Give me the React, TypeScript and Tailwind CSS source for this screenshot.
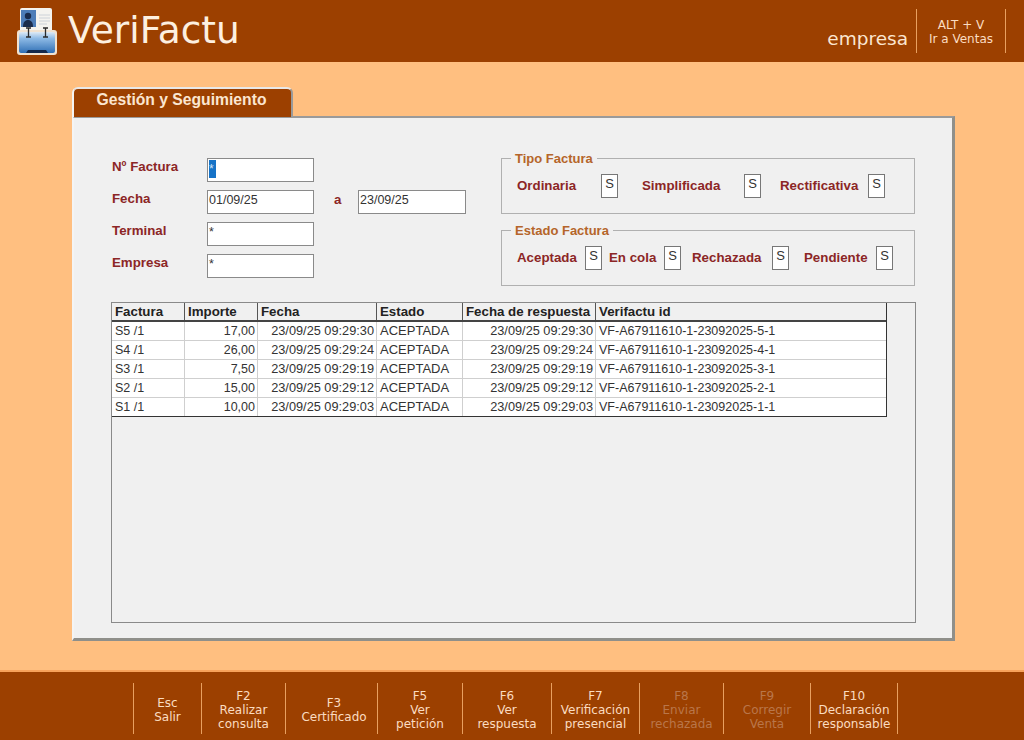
const rows = [
  ["S5 /1", "17,00", "23/09/25 09:29:30", "ACEPTADA", "23/09/25 09:29:30", "VF-A67911610-1-23092025-5-1"],
  ["S4 /1", "26,00", "23/09/25 09:29:24", "ACEPTADA", "23/09/25 09:29:24", "VF-A67911610-1-23092025-4-1"],
  ["S3 /1", "7,50", "23/09/25 09:29:19", "ACEPTADA", "23/09/25 09:29:19", "VF-A67911610-1-23092025-3-1"],
  ["S2 /1", "15,00", "23/09/25 09:29:12", "ACEPTADA", "23/09/25 09:29:12", "VF-A67911610-1-23092025-2-1"],
  ["S1 /1", "10,00", "23/09/25 09:29:03", "ACEPTADA", "23/09/25 09:29:03", "VF-A67911610-1-23092025-1-1"],
]

const headers = ["Factura", "Importe", "Fecha", "Estado", "Fecha de respuesta", "Verifactu id"]

const keys = [
  { w: "w-[68px]", lines: ["Esc", "Salir"] },
  { w: "w-[84px]", lines: ["F2", "Realizar", "consulta"] },
  { w: "w-[92px] pl-[5px]", lines: ["F3", "Certificado"] },
  { w: "w-[85px]", lines: ["F5", "Ver", "petición"] },
  { w: "w-[89px]", lines: ["F6", "Ver", "respuesta"] },
  { w: "w-[88px]", lines: ["F7", "Verificación", "presencial"] },
  { w: "w-[84px]", lines: ["F8", "Enviar", "rechazada"], off: true },
  { w: "w-[87px]", lines: ["F9", "Corregir", "Venta"], off: true },
  { w: "w-[88px]", lines: ["F10", "Declaración", "responsable"] },
]

const Logo = () => (
  <svg width="40" height="47" viewBox="0 0 40 47" className="shrink-0">
    <defs>
      <linearGradient id="box" x1="0" y1="0" x2="0" y2="1">
        <stop offset="0" stopColor="#dfeaf5" />
        <stop offset="0.3" stopColor="#8fbbe6" />
        <stop offset="1" stopColor="#2f6fb5" />
      </linearGradient>
    </defs>
    <rect x="3" y="0" width="32" height="30" rx="2" fill="#f4f3ef" />
    <rect x="4" y="2" width="15" height="17" fill="#4d7db8" />
    <circle cx="11" cy="8" r="3.2" fill="#1a2c4c" />
    <path d="M6 19c0-5 2-7 5-7s5 2 5 7z" fill="#1a2c4c" />
    <path d="M22 7h11M22 10h11M22 13h11M22 16h8" stroke="#cdd2d8" strokeWidth="1" />
    <rect x="0" y="22" width="40" height="25" rx="3" fill="#f1e2d0" />
    <rect x="2" y="24" width="36" height="21" rx="2" fill="url(#box)" />
    <path d="M9 45l2-3h18l2 3z" fill="#14284a" />
    <path d="M9 20h5M11.5 20v9M9 29h5M26 20h5M28.500 20v9M26 29h5" stroke="#2b2b2b" strokeWidth="1.3" />
  </svg>
)

const Field = ({ value, className = "" }: { value: string; className?: string }) => (
  <div className={`h-6 bg-white border border-[#8a8a8a] pl-px text-[12.5px] leading-[18px] text-[#333] ${className}`}>
    {value}
  </div>
)

const Label = ({ children, className = "" }: { children: string; className?: string }) => (
  <span className={`text-[13.3px] font-bold text-[#8c2626] ${className}`}>{children}</span>
)

const Flag = ({ className = "" }: { className?: string }) => (
  <div className={`h-6 w-[17px] shrink-0 bg-white border border-[#777] text-center text-[13px] leading-[18px] text-[#333] ${className}`}>
    S
  </div>
)

const Group = ({ title, children }: { title: string; children: React.ReactNode }) => (
  <div className="relative flex h-14 w-[414px] items-center border border-[#b0b0b0] pl-[15px]">
    <span className="absolute -top-[8px] left-[9px] bg-[#f0f0f0] px-[4px] text-[13px] leading-[16px] font-bold text-[#b5652a]">
      {title}
    </span>
    {children}
  </div>
)

export default function App() {
  return (
    <div className="flex h-[740px] w-[1024px] flex-col overflow-hidden bg-[#ffbf80] font-['Liberation_Sans',Arial,sans-serif]">
      <header className="flex h-[62px] shrink-0 items-center bg-[#9c4000] pl-[17px] font-['DejaVu_Sans',Verdana,sans-serif] text-[#fdf0e0]">
        <Logo />
        <h1 className="ml-[11px] text-[37.5px] leading-none">VeriFactu</h1>
        <span className="ml-auto mt-[16px] text-[18.5px] leading-none text-[#fbe6d0]">empresa</span>
        <div className="ml-[8px] mr-[18px] flex h-[44px] w-[90px] flex-col items-center justify-center border-x border-[#e8a060] pt-[2px] text-[12px] leading-[14px] text-[#fbdcc0]">
          <span>ALT + V</span>
          <span>Ir a Ventas</span>
        </div>
      </header>

      <main className="flex-1 pl-[72px] pr-[69px] pt-[25px]">
        <div className="relative z-10 flex h-[30px] w-[221px] justify-center rounded-t-[6px] border-x-2 border-t-2 border-l-[#f4f4f4] border-r-[#9a9a9a] border-t-[#e8e8e8] bg-[#9c4000] pr-[2px] pt-[2px] text-[15.7px] leading-[18px] font-bold text-[#fbe6d0]">
          Gestión y Seguimiento
        </div>
        <section className="-mt-px h-[525px] border-t-2 border-r-[3px] border-b-[3px] border-l-2 border-t-[#9a9a9a] border-r-[#8f8f8a] border-b-[#8f8f8a] border-l-[#f4f4f4] bg-[#f0f0f0] pl-[37px] pr-[37px] pt-[40px]">
          <div className="flex">
            <div className="flex w-[390px] flex-col gap-2">
              <div className="flex h-6 items-center">
                <Label className="w-[96px] -mt-[7px] pl-px">Nº Factura</Label>
                <div className="h-6 w-[107px] border border-[#8a8a8a] bg-white pl-px pt-px">
                  <span className="block h-[18px] w-[7px] bg-[#1673c7] text-[12px] leading-[18px] text-[#cfe3f7]">*</span>
                </div>
              </div>
              <div className="flex h-6 items-center">
                <Label className="w-[96px] -mt-[7px] pl-px">Fecha</Label>
                <Field value="01/09/25" className="w-[107px]" />
                <Label className="ml-[20px] w-[24px] -mt-[4px]">a</Label>
                <Field value="23/09/25" className="w-[108px]" />
              </div>
              <div className="flex h-6 items-center">
                <Label className="w-[96px] -mt-[7px] pl-px">Terminal</Label>
                <Field value="*" className="w-[107px]" />
              </div>
              <div className="flex h-6 items-center">
                <Label className="w-[96px] -mt-[7px] pl-px">Empresa</Label>
                <Field value="*" className="w-[107px]" />
              </div>
            </div>
            <div className="flex flex-col gap-4">
              <Group title="Tipo Factura">
                <Label className="w-[84px]">Ordinaria</Label>
                <Flag />
                <Label className="ml-[24px] w-[102px]">Simplificada</Label>
                <Flag />
                <Label className="ml-[19px] w-[88px]">Rectificativa</Label>
                <Flag />
              </Group>
              <Group title="Estado Factura">
                <Label className="w-[68px]">Aceptada</Label>
                <Flag />
                <Label className="ml-[7px] w-[55px]">En cola</Label>
                <Flag />
                <Label className="ml-[11px] w-[80px]">Rechazada</Label>
                <Flag />
                <Label className="ml-[15px] w-[72px]">Pendiente</Label>
                <Flag />
              </Group>
            </div>
          </div>

          <div className="mt-4 h-[321px] w-[805px] border border-[#8a8a8a]">
            <div className="w-[775px] border-r border-b border-[#333] bg-white text-[12.5px] text-[#333]">
              <div className="grid h-[19px] grid-cols-[73px_73px_119px_86px_133px_1fr] border-b-2 border-[#444] bg-[#f0f0f0] text-[13.3px] leading-[17px] font-bold text-[#222]">
                {headers.map((h, i) => (
                  <div key={h} className={`pl-[3px] ${i < 5 ? "border-r border-[#555]" : ""}`}>
                    {h}
                  </div>
                ))}
              </div>
              {rows.map((r, idx) => (
                <div
                  key={r[0]}
                  className={`grid grid-cols-[73px_73px_119px_86px_133px_1fr] leading-[18px] ${idx < 4 ? "h-[19px] border-b border-[#cfcfcf]" : "h-[18px]"}`}
                >
                  {r.map((c, i) => (
                    <div
                      key={i}
                      className={`whitespace-nowrap ${i < 5 ? "border-r border-[#cfcfcf]" : ""} ${[1, 2, 4].includes(i) ? "pr-[2px] text-right" : "pl-[3px]"} ${i === 2 || i === 4 ? "text-[12.75px]" : ""} ${i === 3 ? "text-[13px]" : ""}`}
                    >
                      {c}
                    </div>
                  ))}
                </div>
              ))}
            </div>
          </div>
        </section>
      </main>

      <footer className="flex h-[70px] shrink-0 border-t-2 border-[#f7a25a] bg-[#9c4000] pl-[133px] pt-[11px] font-['DejaVu_Sans',Verdana,sans-serif] text-[12px] leading-[14px]">
        {keys.map((k, i) => (
          <div
            key={k.lines[0]}
            className={`flex h-[51px] ${k.w} flex-col items-center justify-center border-l border-[#e8a060] pt-[3px] ${i === keys.length - 1 ? "border-r" : ""} ${k.off ? "text-[#b9764a]" : "text-[#fbdcc0]"}`}
          >
            {k.lines.map((l) => (
              <span key={l}>{l}</span>
            ))}
          </div>
        ))}
      </footer>
    </div>
  )
}
